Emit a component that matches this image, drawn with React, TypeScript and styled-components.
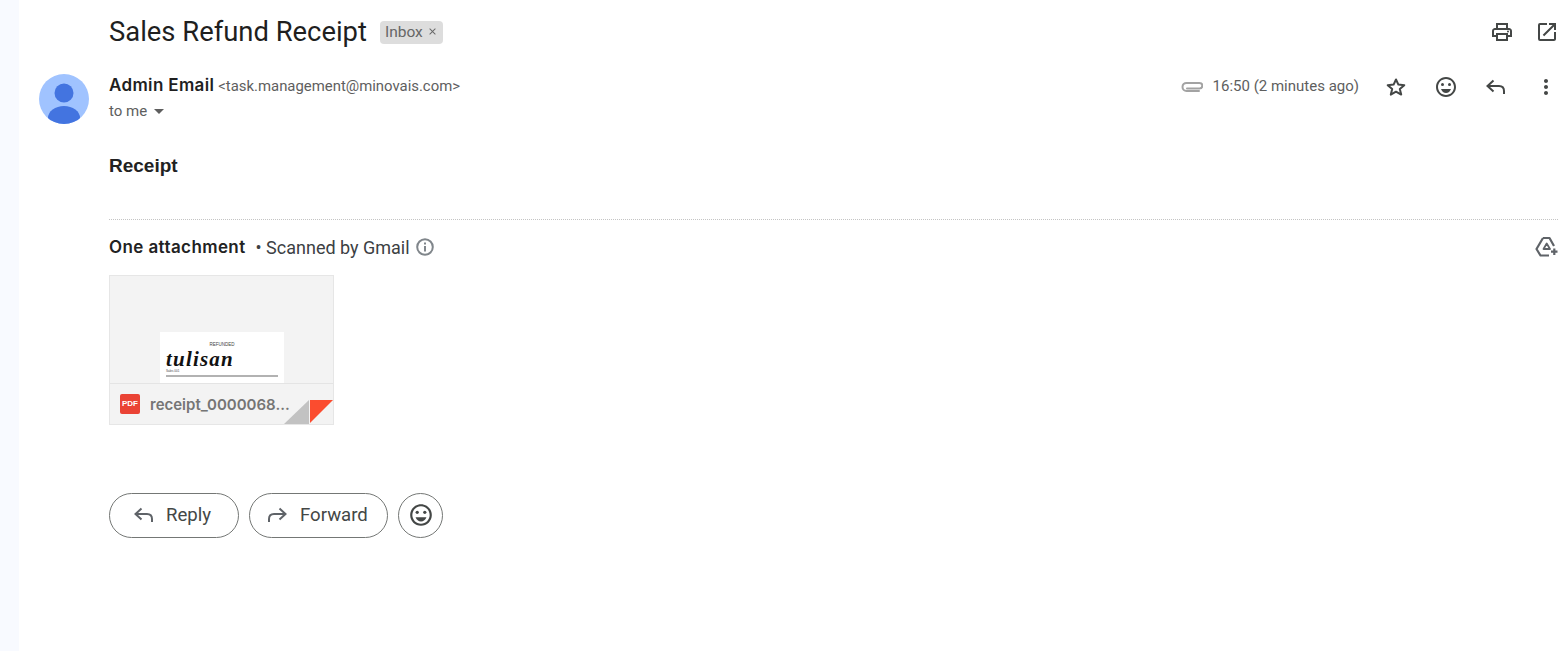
import React from "react";
import styled, { createGlobalStyle } from "styled-components";
import {
  MdOutlinePrint,
  MdOpenInNew,
  MdOutlineEmojiEmotions,
  MdMoreVert,
  MdArrowDropDown,
  MdClose,
} from "react-icons/md";

const Global = createGlobalStyle`
  html, body { margin: 0; padding: 0; background: #fff; height: 100%; overflow: hidden; }
  body { font-family: Roboto, "Liberation Sans", sans-serif; color: #202124; }
`;

const Page = styled.div`
  display: flex;
  width: 1568px;
  height: 651px;
  overflow: hidden;
`;
const Rail = styled.div`
  flex: 0 0 19px;
  background: #f8faff;
`;
const Main = styled.main`
  flex: 1;
  min-width: 0;
  padding: 0 10px 0 20px;
  display: flex;
  flex-direction: column;
`;
const SubjectRow = styled.header`
  height: 64px;
  display: flex;
  align-items: center;
  padding-left: 70px;
`;
const Subject = styled.h1`
  margin: 0;
  font: 400 27.4px/32px Roboto, sans-serif;
  color: #1f1f1f;
`;
const Chip = styled.span`
  margin-left: 13px;
  height: 23px;
  padding: 0 5px 1px;
  box-sizing: border-box;
  border-radius: 4px;
  background: #dddddd;
  color: #666;
  font-size: 15.5px;
  display: inline-flex;
  align-items: center;
  gap: 4px;
`;
const TopIcons = styled.div`
  margin-left: auto;
  margin-right: -1px;
  display: flex;
  align-items: center;
  gap: 21px;
  color: #444746;
`;
const Message = styled.section`
  margin-top: 10px;
  display: flex;
  gap: 20px;
`;
const Avatar = styled.div`
  flex: 0 0 50px;
  height: 50px;
`;
const Body = styled.div`
  flex: 1;
  min-width: 0;
`;
const MetaRow = styled.div`
  display: flex;
  justify-content: space-between;
  height: 24px;
`;
const Sender = styled.div`
  line-height: 24px;
  white-space: nowrap;
`;
const SenderName = styled.span`
  font: 600 17px Inter, sans-serif;
  letter-spacing: 0.35px;
  color: #1f1f1f;
`;
const SenderAddress = styled.span`
  font-size: 14.9px;
  color: #5e5e5e;
  margin-left: 4px;
`;
const Time = styled.span`
  font-size: 15px;
  color: #5e5e5e;
  margin-left: 10px;
`;
const Actions = styled.div`
  display: flex;
  align-items: center;
  color: #444746;
`;
const ActionIcons = styled.div`
  margin-left: 25px;
  padding-top: 2px;
  display: flex;
  align-items: center;
  gap: 26px;
`;
const RecipientRow = styled.div`
  height: 26px;
  display: flex;
  align-items: center;
  font-size: 15px;
  color: #5e5e5e;
`;
const BodyText = styled.p`
  margin: 30px 0 0;
  font: 700 19px/24px "Liberation Sans", Arial, sans-serif;
  color: #222;
`;
const Divider = styled.hr`
  margin: 41px 0 0;
  border: 0;
  border-top: 1px dotted #c4c4c4;
`;
const AttachHeader = styled.div`
  height: 54px;
  display: flex;
  align-items: center;
`;
const AttachTitle = styled.span`
  font: 600 17px Inter, sans-serif;
  letter-spacing: 0.4px;
  color: #222;
`;
const AttachNote = styled.span`
  margin-left: 10px;
  font-size: 18px;
  color: #3c4043;
`;
const InfoWrap = styled.span`
  margin-left: 5px;
  display: flex;
  color: #80868b;
`;
const DriveButton = styled.div`
  margin-left: auto;
  display: flex;
  color: #5f6368;
`;
const Card = styled.div`
  position: relative;
  width: 225px;
  height: 150px;
  margin-top: 1px;
  box-sizing: border-box;
  border: 1px solid #e6e6e6;
  background: #f3f3f3;
  overflow: hidden;
  display: flex;
  flex-direction: column;
  justify-content: flex-end;
`;
const Preview = styled.div`
  margin: 0 0 0 50px;
  width: 124px;
  height: 51px;
  box-sizing: border-box;
  background: #fff;
  padding: 10px 6px 0;
  display: flex;
  flex-direction: column;
  overflow: hidden;
`;
const PreviewHead = styled.div`
  text-align: center;
  font: 4.5px/6px "Liberation Sans", sans-serif;
  color: #444;
`;
const PreviewLogo = styled.div`
  margin-top: 1px;
  font: italic 700 21px/20px "Liberation Serif", serif;
  letter-spacing: 1.2px;
  color: #111;
`;
const PreviewSmall = styled.div`
  font: 3px/4px "Liberation Sans", sans-serif;
  color: #444;
`;
const PreviewBar = styled.div`
  height: 2px;
  margin-top: 2px;
  background: #b2b2b2;
`;
const Caption = styled.div`
  height: 40px;
  border-top: 1px solid #e4e4e4;
  display: flex;
  align-items: center;
  padding-left: 10px;
  gap: 10px;
`;
const PdfBadge = styled.span`
  width: 20px;
  height: 20px;
  border-radius: 2px;
  background: #ea4335;
  color: #fff;
  font: 700 8px/20px "Liberation Sans", sans-serif;
  text-align: center;
`;
const FileName = styled.span`
  font: 600 15px Inter, sans-serif;
  color: #757575;
  white-space: nowrap;
`;
const Fold = styled.svg`
  position: absolute;
  right: 0;
  bottom: 0;
`;
const ButtonRow = styled.div`
  margin-top: 68px;
  display: flex;
  gap: 10px;
`;
const PillButton = styled.button<{ $w: number; $pad?: number; $gap?: number }>`
  width: ${(p) => p.$w}px;
  height: 45px;
  box-sizing: border-box;
  border: 1px solid #747775;
  border-radius: 23px;
  background: #fff;
  color: #444746;
  font: 400 18.6px Roboto, sans-serif;
  display: flex;
  align-items: center;
  justify-content: ${(p) => (p.$pad ? "flex-start" : "center")};
  padding: 0 0 2px ${(p) => p.$pad ?? 0}px;
  gap: ${(p) => p.$gap ?? 0}px;
`;
const Arrow = ({ mirrored, color = "#444746" }: { mirrored?: boolean; color?: string }) => (
  <svg width="24" height="24" viewBox="0 0 24 24" fill="none" stroke={color} strokeWidth="2"
    style={mirrored ? { transform: "scaleX(-1)" } : undefined}>
    <path d="M9.5 5.5 3.5 11l6 5.5M3.5 11H15c3 0 5 2 5 5v3" />
  </svg>
);
const Star = () => (
  <svg width="24" height="24" viewBox="0 0 24 24" fill="none" stroke="#444746" strokeWidth="2" strokeLinejoin="round">
    <polygon points="12,4.5 14.4,9.6 20.3,10.2 15.8,14 17.2,19.6 12,16.7 6.8,19.6 8.2,14 3.7,10.2 9.6,9.6" />
  </svg>
);
const PaperClip = () => (
  <svg width="22" height="14" viewBox="0 0 22 14" fill="none" stroke="#a3a3a3" strokeWidth="2" strokeLinecap="round">
    <path d="M6 9.5h12.5a2.8 2.8 0 0 0 0-5.6H5.5a4 4 0 0 0 0 8H18" />
  </svg>
);
const Info = () => (
  <svg width="20" height="20" viewBox="0 0 20 20" fill="none" stroke="currentColor" strokeWidth="2">
    <circle cx="10" cy="10" r="7.8" />
    <path d="M10 9v5.5M10 5.5v2" />
  </svg>
);
const DriveAdd = () => (
  <svg width="24" height="24" viewBox="0 0 24 24" fill="none" stroke="currentColor" strokeWidth="2.2" strokeLinejoin="round">
    <path d="M9 3h6.5l4.5 8M9 3 2.5 14l4 6.5H15" />
    <path d="M12.7 8.5 9.5 14h6.5z" strokeWidth="1.8" />
    <path d="M20.3 13.5V20M17 16.7h6.5" />
  </svg>
);
const PersonAvatar = () => (
  <svg width="50" height="50" viewBox="0 0 50 50">
    <defs><clipPath id="av"><circle cx="25" cy="25" r="25" /></clipPath></defs>
    <circle cx="25" cy="25" r="25" fill="#a0c3ff" />
    <g clipPath="url(#av)" fill="#4374e0">
      <circle cx="25" cy="19" r="9.5" />
      <ellipse cx="25" cy="44" rx="16" ry="12" />
    </g>
  </svg>
);

export default function App() {
  return (
    <>
      <Global />
      <Page>
        <Rail />
        <Main>
          <SubjectRow>
            <Subject>Sales Refund Receipt</Subject>
            <Chip>Inbox <MdClose size={11} /></Chip>
            <TopIcons>
              <MdOutlinePrint size={24} />
              <MdOpenInNew size={24} />
            </TopIcons>
          </SubjectRow>
          <Message>
            <Avatar><PersonAvatar /></Avatar>
            <Body>
              <MetaRow>
                <Sender>
                  <SenderName>Admin Email</SenderName>
                  <SenderAddress>&lt;task.management@minovais.com&gt;</SenderAddress>
                </Sender>
                <Actions>
                  <PaperClip />
                  <Time>16:50 (2 minutes ago)</Time>
                  <ActionIcons>
                    <Star />
                    <MdOutlineEmojiEmotions size={24} />
                    <Arrow />
                    <MdMoreVert size={24} />
                  </ActionIcons>
                </Actions>
              </MetaRow>
              <RecipientRow>to me <MdArrowDropDown size={24} /></RecipientRow>
              <BodyText>Receipt</BodyText>
              <Divider />
              <AttachHeader>
                <AttachTitle>One attachment</AttachTitle>
                <AttachNote>• Scanned by Gmail</AttachNote>
                <InfoWrap><Info /></InfoWrap>
                <DriveButton><DriveAdd /></DriveButton>
              </AttachHeader>
              <Card>
                <Preview>
                  <PreviewHead>REFUNDED</PreviewHead>
                  <PreviewLogo>tulisan</PreviewLogo>
                  <PreviewSmall>Sales 001</PreviewSmall>
                  <PreviewBar />
                </Preview>
                <Caption>
                  <PdfBadge>PDF</PdfBadge>
                  <FileName>receipt_0000068...</FileName>
                </Caption>
                <Fold width="49" height="24" viewBox="0 0 49 24">
                  <polygon points="0,24 25,0 25,24" fill="#c2c2c2" />
                  <polygon points="26,0 49,0 26,23" fill="#fb4c2f" />
                </Fold>
              </Card>
              <ButtonRow>
                <PillButton $w={130} $pad={22} $gap={10}><Arrow color="#5f6368" />Reply</PillButton>
                <PillButton $w={139} $pad={15} $gap={11}><Arrow mirrored color="#5f6368" />Forward</PillButton>
                <PillButton $w={45}><MdOutlineEmojiEmotions size={26} /></PillButton>
              </ButtonRow>
            </Body>
          </Message>
        </Main>
      </Page>
    </>
  );
}
